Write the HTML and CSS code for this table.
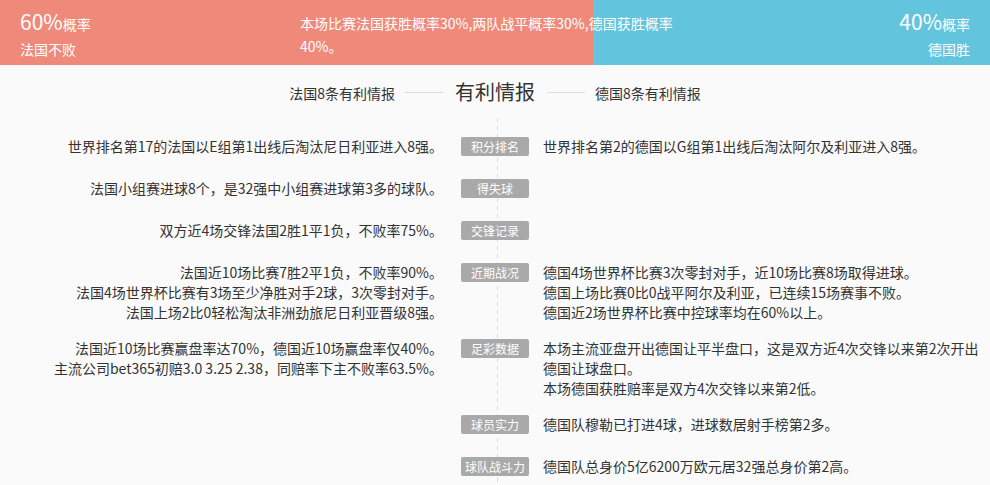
FILE: index.html
```html
<!DOCTYPE html>
<html lang="zh-CN">
<head>
<meta charset="utf-8">
<title>有利情报</title>
<link rel="stylesheet" href="styles.css">
</head>
<body>
<div class="header">
  <div class="side side-fr">
    <div class="pct">60%<span class="unit">概率</span></div>
    <div class="sub">法国不败</div>
  </div>
  <div class="side side-de">
    <div class="pct">40%<span class="unit">概率</span></div>
    <div class="sub">德国胜</div>
  </div>
  <div class="summary">本场比赛法国获胜概率30%,两队战平概率30%,德国获胜概率40%。</div>
</div>

<div class="title-bar">
  <span class="side-label">法国8条有利情报</span>
  <span class="rule"></span>
  <h2 class="title">有利情报</h2>
  <span class="rule"></span>
  <span class="side-label">德国8条有利情报</span>
</div>

<div class="list">
  <div class="row">
    <div class="left"><p>世界排名第17的法国以E组第1出线后淘汰尼日利亚进入8强。</p></div>
    <div class="mid"><span class="tag">积分排名</span></div>
    <div class="right"><p>世界排名第2的德国以G组第1出线后淘汰阿尔及利亚进入8强。</p></div>
  </div>
  <div class="row">
    <div class="left"><p>法国小组赛进球8个，是32强中小组赛进球第3多的球队。</p></div>
    <div class="mid"><span class="tag">得失球</span></div>
    <div class="right"></div>
  </div>
  <div class="row">
    <div class="left"><p>双方近4场交锋法国2胜1平1负，不败率75%。</p></div>
    <div class="mid"><span class="tag">交锋记录</span></div>
    <div class="right"></div>
  </div>
  <div class="row">
    <div class="left">
      <p>法国近10场比赛7胜2平1负，不败率90%。</p>
      <p>法国4场世界杯比赛有3场至少净胜对手2球，3次零封对手。</p>
      <p>法国上场2比0轻松淘汰非洲劲旅尼日利亚晋级8强。</p>
    </div>
    <div class="mid"><span class="tag">近期战况</span></div>
    <div class="right">
      <p>德国4场世界杯比赛3次零封对手，近10场比赛8场取得进球。</p>
      <p>德国上场比赛0比0战平阿尔及利亚，已连续15场赛事不败。</p>
      <p>德国近2场世界杯比赛中控球率均在60%以上。</p>
    </div>
  </div>
  <div class="row">
    <div class="left">
      <p>法国近10场比赛赢盘率达70%，德国近10场赢盘率仅40%。</p>
      <p>主流公司bet365初赔3.0 3.25 2.38，同赔率下主不败率63.5%。</p>
    </div>
    <div class="mid"><span class="tag">足彩数据</span></div>
    <div class="right">
      <p>本场主流亚盘开出德国让平半盘口，这是双方近4次交锋以来第2次开出德国让球盘口。</p>
      <p>本场德国获胜赔率是双方4次交锋以来第2低。</p>
    </div>
  </div>
  <div class="row">
    <div class="left"></div>
    <div class="mid"><span class="tag">球员实力</span></div>
    <div class="right"><p>德国队穆勒已打进4球，进球数居射手榜第2多。</p></div>
  </div>
  <div class="row">
    <div class="left"></div>
    <div class="mid"><span class="tag">球队战斗力</span></div>
    <div class="right"><p>德国队总身价5亿6200万欧元居32强总身价第2高。</p></div>
  </div>
</div>
</body>
</html>
```

FILE: styles.css
```css
* { box-sizing: border-box; }

html, body {
  margin: 0;
  padding: 0;
  background: #fafafa;
  color: #333;
  font-family: "Noto Sans CJK SC", sans-serif;
  font-size: 14px;
}

p { margin: 0; }

.header {
  position: relative;
  display: flex;
  height: 65px;
  color: #fff;
}

.side {
  padding: 8px 20px 0;
}

.side-fr {
  width: 60%;
  background: #ef8a7b;
}

.side-de {
  width: 40%;
  background: #63c4de;
  text-align: right;
}

.pct {
  font-size: 21px;
  line-height: 26px;
}

.unit {
  font-size: 14px;
}

.sub {
  font-size: 14px;
  line-height: 24px;
}

.summary {
  position: absolute;
  left: 300px;
  top: 12px;
  width: 390px;
  font-size: 14px;
  line-height: 23px;
}

.title-bar {
  height: 53px;
  display: flex;
  align-items: center;
  justify-content: center;
}

.side-label {
  font-size: 14px;
  line-height: 20px;
  margin-top: 2px;
}

.rule {
  width: 38px;
  height: 1px;
  background: #dddddd;
  margin: 2px 10px 0;
}

.title {
  margin: 0 2px;
  font-size: 20px;
  font-weight: normal;
  line-height: 26px;
}

.list {
  padding-top: 18px;
  background-image: repeating-linear-gradient(to bottom, #dcdcdc 0, #dcdcdc 4px, transparent 4px, transparent 8px);
  background-size: 1px 100%;
  background-position: 497px 0;
  background-repeat: no-repeat;
}

.row {
  display: grid;
  grid-template-columns: 443px 100px 1fr;
  min-height: 42px;
  padding-bottom: 16px;
  line-height: 20px;
}

.left {
  text-align: right;
}

.right {
  padding-right: 10px;
}

.mid {
  padding-left: 18px;
}

.tag {
  display: block;
  width: 68px;
  height: 19px;
  margin-top: 1px;
  background: #a9a9a9;
  border-radius: 2px;
  color: #fff;
  font-size: 12px;
  line-height: 19px;
  text-align: center;
}
```
